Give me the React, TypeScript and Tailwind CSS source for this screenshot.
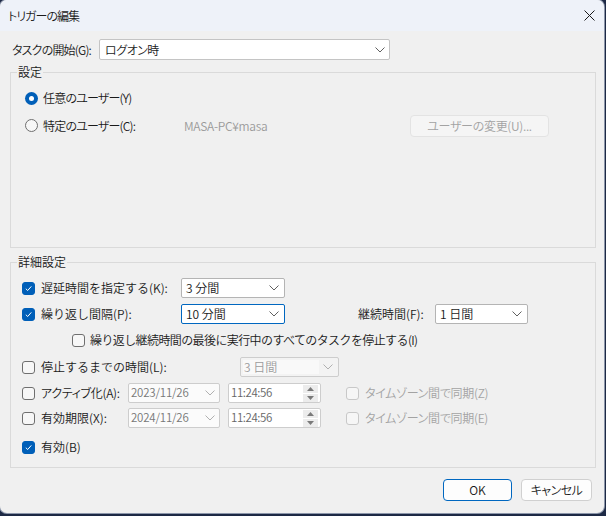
import React from 'react';

const palt = "[font-feature-settings:'palt']";

const Chevron = ({ color = '#606060' }: { color?: string }) => (
  <svg width="10" height="6" viewBox="0 0 10 6" className="shrink-0">
    <path d="M0.5 0.5 L5 5 L9.5 0.5" stroke={color} strokeWidth="1" fill="none" />
  </svg>
);

const Checkbox = ({ checked = false, disabled = false }: { checked?: boolean; disabled?: boolean }) => {
  const tone = checked
    ? 'border-[#005fb8] bg-[#005fb8]'
    : disabled
      ? 'border-[#c8c8c8] bg-[#f6f6f6]'
      : 'border-[#6f6f6f] bg-[#f7f7f7]';
  return (
    <span className={`flex h-[13px] w-[13px] shrink-0 items-center justify-center rounded-[3px] border ${tone}`}>
      {checked && (
        <svg width="9" height="9" viewBox="0 0 9 9">
          <path d="M1.8 4.7 L3.7 6.5 L7.3 2.4" stroke="white" strokeWidth="1" fill="none" />
        </svg>
      )}
    </span>
  );
};

const Radio = ({ checked = false }: { checked?: boolean }) =>
  checked ? (
    <span className="flex h-[13px] w-[13px] shrink-0 items-center justify-center rounded-full bg-[#005fb8]">
      <span className="h-[5px] w-[5px] rounded-full bg-white" />
    </span>
  ) : (
    <span className="h-[13px] w-[13px] shrink-0 rounded-full border border-[#6f6f6f] bg-[#f7f7f7]" />
  );

interface SelectProps {
  value: string;
  width: string;
  focused?: boolean;
}

const Select = ({ value, width, focused = false }: SelectProps) => (
  <div
    className={`flex h-[20px] ${width} items-center justify-between rounded-[2px] border bg-white pl-[4px] pr-[5px] ${
      focused ? 'border-[#0067c0]' : 'border-[#b4b4b4]'
    }`}
  >
    <span className="leading-none">{value}</span>
    <Chevron />
  </div>
);

const Spinner = () => (
  <div className="flex h-[17px] w-[15px] flex-col gap-[1px]">
    <div className="flex flex-1 items-center justify-center bg-[#ececec]">
      <svg width="7" height="4" viewBox="0 0 7 4">
        <path d="M0 4 L3.5 0 L7 4 Z" fill="#7a7a7a" />
      </svg>
    </div>
    <div className="flex flex-1 items-center justify-center bg-[#ececec]">
      <svg width="7" height="4" viewBox="0 0 7 4">
        <path d="M0 0 L3.5 4 L7 0 Z" fill="#7a7a7a" />
      </svg>
    </div>
  </div>
);

const DateBox = ({ value }: { value: string }) => (
  <div className="flex h-[20px] w-[92px] items-center justify-between rounded-[2px] border border-[#cdcdcd] bg-[#fbfbfb] pl-[2px] pr-[4px]">
    <span className="text-[11.5px] leading-none tracking-[-0.2px] text-[#777]">{value}</span>
    <Chevron color="#b0b0b0" />
  </div>
);

const TimeBox = ({ value }: { value: string }) => (
  <div className="ml-[8px] flex h-[20px] w-[93px] items-center justify-between rounded-[2px] border border-[#cdcdcd] bg-white pl-[2px] pr-[2px]">
    <span className="text-[11.5px] leading-none tracking-[-0.4px] text-[#666]">{value}</span>
    <Spinner />
  </div>
);

const CheckLabel = ({
  label,
  checked = false,
  disabled = false,
  width = '',
  tight = false,
}: {
  label: string;
  checked?: boolean;
  disabled?: boolean;
  width?: string;
  tight?: boolean;
}) => (
  <div className={`flex shrink-0 items-center gap-[6px] ${width}`}>
    <Checkbox checked={checked} disabled={disabled} />
    <span
      className={`whitespace-nowrap leading-none ${disabled ? 'text-[#a3a3a3]' : ''} ${
        tight ? `${palt} tracking-[-0.3px]` : ''
      }`}
    >
      {label}
    </span>
  </div>
);

export default function App() {
  return (
    <div className="h-[516px] w-[606px] bg-[#1d2945] font-['Noto_Sans_CJK_JP',sans-serif] text-[12px] font-[350] text-[#1a1a1a]">
      <div className="flex h-[513px] w-[604px] flex-col overflow-hidden rounded-[7px] bg-[#f0f0f0] ring-1 ring-[#8c96aa]">
        {/* title bar */}
        <div className="flex h-[31px] shrink-0 items-center justify-between bg-[#eef2f9] pl-[8px] pr-[9px]">
          <span className={`leading-none tracking-[-1px] ${palt}`}>トリガーの編集</span>
          <svg width="11" height="11" viewBox="0 0 11 11">
            <path d="M0.5 0.5 L10.5 10.5 M10.5 0.5 L0.5 10.5" stroke="#1a1a1a" strokeWidth="1" />
          </svg>
        </div>

        <div className="flex flex-1 flex-col pl-[10px] pr-[8px]">
          {/* start */}
          <div className="mt-[8px] flex h-[21px] items-center">
            <span className={`w-[89px] whitespace-nowrap pl-[2px] leading-none tracking-[-0.8px] ${palt}`}>
              タスクの開始(G):
            </span>
            <div className="flex h-[21px] w-[291px] items-center justify-between rounded-[2px] border border-[#c4c4c4] bg-white pl-[5px] pr-[4px]">
              <span className={`leading-none tracking-[-0.5px] ${palt}`}>ログオン時</span>
              <Chevron />
            </div>
          </div>

          {/* settings */}
          <fieldset className="mt-[4px] h-[184px] border border-[#dadada]">
            <legend className="ml-[6px] px-[1px] leading-[16px]">設定</legend>
            <div className="flex flex-col pl-[14px]">
              <div className="mt-[8px] flex h-[20px] items-center gap-[5px]">
                <Radio checked />
                <span className={`leading-none tracking-[-0.8px] ${palt}`}>任意のユーザー(Y)</span>
              </div>
              <div className="mt-[6px] flex h-[23px] items-center">
                <div className="flex w-[159px] items-center gap-[5px]">
                  <Radio />
                  <span className={`leading-none tracking-[-0.8px] ${palt}`}>特定のユーザー(C):</span>
                </div>
                <span className="w-[226px] leading-none tracking-[-0.3px] text-[#9a9a9a]">MASA-PC¥masa</span>
                <div
                  className={`flex h-[22px] w-[139px] items-center justify-center rounded-[4px] border border-[#e3e3e3] bg-[#f5f5f5] text-[#a3a3a3] tracking-[-0.3px] ${palt}`}
                >
                  ユーザーの変更(U)...
                </div>
              </div>
            </div>
          </fieldset>

          {/* advanced */}
          <fieldset className="mt-[6px] h-[214px] border border-[#dadada]">
            <legend className="ml-[6px] px-[1px] leading-[16px]">詳細設定</legend>
            <div className="flex flex-col pl-[11px]">
              <div className="mt-[8px] flex h-[20px] items-center">
                <CheckLabel label="遅延時間を指定する(K):" checked width="w-[159px]" />
                <Select value="3 分間" width="w-[104px]" />
              </div>
              <div className="mt-[6px] flex h-[20px] items-center">
                <CheckLabel label="繰り返し間隔(P):" checked width="w-[159px]" />
                <Select value="10 分間" width="w-[104px]" focused />
                <span className="ml-[73px] w-[77px] leading-none">継続時間(F):</span>
                <Select value="1 日間" width="w-[93px]" />
              </div>
              <div className="mt-[6px] flex h-[20px] items-center pl-[50px]">
                <div className="flex items-center gap-[5px]">
                  <Checkbox />
                  <span className="whitespace-nowrap leading-none tracking-[-0.6px]">
                    繰り返し継続時間の最後に実行中のすべてのタスクを停止する(I)
                  </span>
                </div>
              </div>
              <div className="mt-[7px] flex h-[20px] items-center">
                <CheckLabel label="停止するまでの時間(L):" width="w-[218px]" />
                <div className="flex h-[20px] w-[99px] items-center justify-between rounded-[2px] border border-[#cdcdcd] bg-[#f3f3f3] p-[2px] pr-[5px]">
                  <div className="flex h-full w-[76px] items-center bg-[#f9f9f9] pl-[1px]">
                    <span className="leading-none text-[#9c9c9c]">3 日間</span>
                  </div>
                  <Chevron color="#b0b0b0" />
                </div>
              </div>
              <div className="mt-[6px] flex h-[20px] items-center">
                <CheckLabel label="アクティブ化(A):" width="w-[106px]" tight />
                <DateBox value="2023/11/26" />
                <TimeBox value="11:24:56" />
                <div className="ml-[25px]">
                  <CheckLabel label="タイムゾーン間で同期(Z)" disabled tight />
                </div>
              </div>
              <div className="mt-[5px] flex h-[20px] items-center">
                <CheckLabel label="有効期限(X):" width="w-[106px]" />
                <DateBox value="2024/11/26" />
                <TimeBox value="11:24:56" />
                <div className="ml-[25px]">
                  <CheckLabel label="タイムゾーン間で同期(E)" disabled tight />
                </div>
              </div>
              <div className="mt-[9px] flex h-[20px] items-center">
                <CheckLabel label="有効(B)" checked />
              </div>
            </div>
          </fieldset>

          {/* buttons */}
          <div className="mt-[11px] flex justify-end gap-[9px] pr-[4px]">
            <button className="flex h-[22px] w-[69px] items-center justify-center rounded-[4px] border border-[#0067c0] bg-[#fdfdfd] leading-none">
              OK
            </button>
            <button
              className={`flex h-[22px] w-[71px] items-center justify-center rounded-[4px] border border-[#d0d0d0] bg-[#fdfdfd] leading-none tracking-[-0.5px] ${palt}`}
            >
              キャンセル
            </button>
          </div>
        </div>
      </div>
    </div>
  );
}
